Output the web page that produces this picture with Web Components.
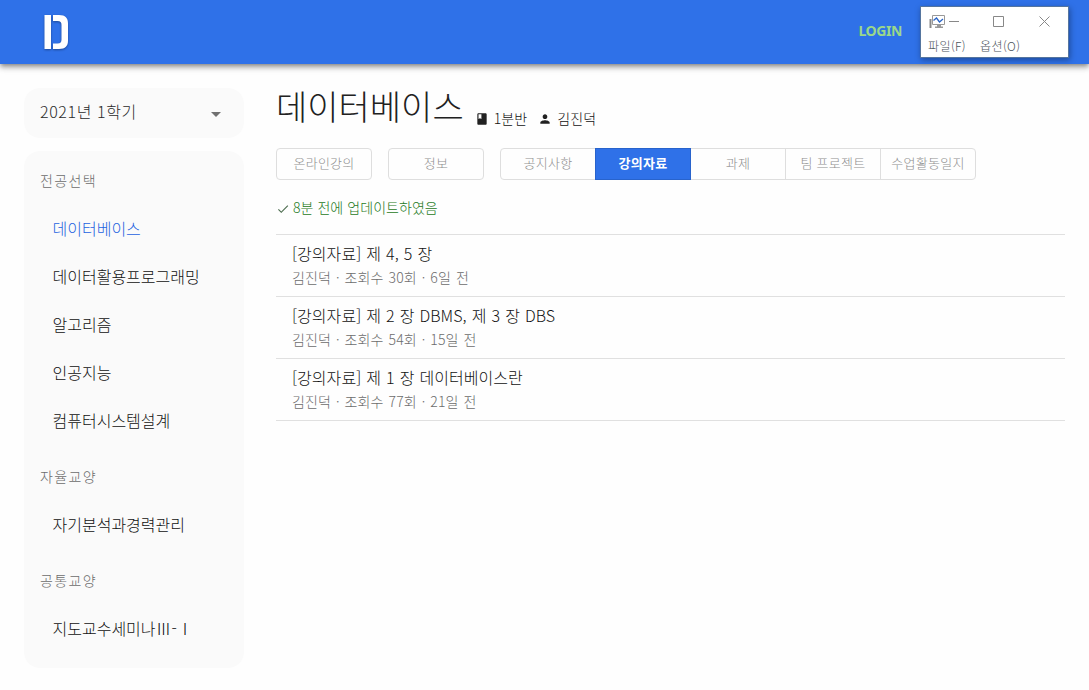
<!DOCTYPE html>
<html lang="ko">
<head>
<meta charset="utf-8">
<title>데이터베이스</title>
<style>
html, body { margin: 0; height: 100%; overflow: hidden; background: #fefefe; }
body { font-family: "Noto Sans CJK KR", "Noto Sans", sans-serif; font-weight: 300; color: #212121; }
</style>
</head>
<body>
<lms-page></lms-page>
<script>
function define(name, html) {
  const template = document.createElement('template');
  template.innerHTML = html;
  customElements.define(name, class extends HTMLElement {
    constructor() {
      super();
      this.attachShadow({ mode: 'open' }).append(template.content.cloneNode(true));
    }
  });
}

define('app-bar', `
<style>
:host { display: flex; position: relative; z-index: 2; box-sizing: border-box; height: 64px; padding: 15px 187px 0 44px; justify-content: space-between; align-items: flex-start; background: #2f71e8; box-shadow: 0 2px 4px -1px rgba(0,0,0,.3), 0 4px 5px rgba(0,0,0,.2), 0 1px 10px rgba(0,0,0,.14); }
svg { filter: drop-shadow(0 1px 1px rgba(0,0,0,.35)); }
.login { color: #9bd88a; font: 700 14px/20px "Noto Sans", sans-serif; margin-top: 6px; letter-spacing: -.4px; }
</style>
<svg width="25" height="35" viewBox="0 0 25 35" fill="#fff"><path d="M.5 0H7v34H.5zM9 0h6c6.500 0 9 3 9 8.500v17c0 5.500-2.500 8.500-9 8.500H9v-5.500h4.500c3 0 4-1.500 4-4V10c0-2.500-1-4-4-4H9z"/></svg>
<span class="login"><slot></slot></span>`);

define('tool-window', `
<style>
:host { display: block; position: absolute; z-index: 5; left: 920px; top: 6px; width: 149px; height: 52px; box-sizing: border-box; border: 1px solid #55759f; background: #fff; box-shadow: 1px 2px 6px rgba(0,0,0,.35); font-size: 12px; color: #4b545c; }
.bar { display: flex; height: 28px; align-items: center; padding: 0 17px 0 8px; }
.min { margin-left: 3px; } .max { margin-left: 34px; } .close { margin-left: 35px; }
.menu { display: flex; gap: 14px; padding-left: 7px; line-height: 22px; letter-spacing: .4px; }
svg { display: block; flex: none; }
</style>
<div class="bar">
<svg width="17" height="16" viewBox="0 0 17 16"><path d="M.5 6h2v9h-2z" fill="#888"/><path d="M3.500 2.500h12v9h-12z" fill="#fff" stroke="#999"/><path d="M4.500 7.500 7.500 5l3 4 3.500-3" fill="none" stroke="#2864c8" stroke-width="1.300"/><path d="M8 12h4v1.500h2V15H6v-1.500h2z" fill="#999"/></svg>
<svg class="min" width="10" height="11"><path d="M0 5.500h10" stroke="#888"/></svg>
<svg class="max" width="11" height="11"><path d="M.5.500h10v10H.5z" fill="none" stroke="#888"/></svg>
<svg class="close" width="11" height="11"><path d="m.5.500 10 10m0-10-10 10" fill="none" stroke="#888"/></svg>
</div>
<div class="menu"><span>파일(F)</span><span>옵션(O)</span></div>`);

define('semester-select', `
<style>
:host { display: flex; box-sizing: border-box; height: 50px; border-radius: 16px; background: #fafafa; padding: 0 16px; align-items: center; justify-content: space-between; font-size: 16px; letter-spacing: .6px; color: #2a2a2a; }
span { line-height: 24px; margin-top: -4px; }
svg { display: block; margin: 2px 0 0; }
</style>
<span><slot></slot></span>
<svg width="24" height="24" viewBox="0 0 24 24" fill="#707070"><path d="m7 10 5 5 5-5z"/></svg>`);

define('course-panel', `
<style>
:host { display: flex; flex-direction: column; box-sizing: border-box; height: 517px; margin-top: 13px; padding: 5px 0 6px; gap: 8px; border-radius: 16px; background: #fafafa; }
</style><slot></slot>`);
define('course-group', `
<style>
:host { display: block; }
.head { line-height: 48px; font-size: 14px; letter-spacing: 1.350px; padding-left: 16px; color: #6c6c6c; }
</style><div class="head"><slot name="head"></slot></div><slot></slot>`);
define('course-link', `
<style>
:host { display: block; height: 48px; line-height: 48px; padding-left: 28.500px; font-size: 16px; color: #111; }
:host([active]) { color: #1d62e0; }
</style><slot></slot>`);

define('course-title', `
<style>
:host { display: flex; height: 48px; align-items: flex-start; }
h1 { margin: -3px 12px 0 0; font-size: 34px; line-height: 42px; font-weight: 300; }
.meta { display: flex; align-items: center; gap: 5px; height: 24px; margin: 18px 12px 0 0; font-size: 14px; letter-spacing: .1px; color: #111; }
.meta:last-child { margin-left: -1px; }
svg { display: block; margin-top: 2px; }
h1 + .meta svg { margin-left: -1px; }
</style>
<h1><slot></slot></h1>
<span class="meta"><svg width="14" height="14" viewBox="0 0 24 24" fill="#212121"><path d="M18 2H6c-1.100 0-2 .9-2 2v16c0 1.100.9 2 2 2h12c1.100 0 2-.9 2-2V4c0-1.100-.9-2-2-2zM6 4h5v8l-2.500-1.500L6 12V4z"/></svg><slot name="section"></slot></span>
<span class="meta"><svg width="14" height="14" viewBox="0 0 24 24" fill="#212121"><path d="M12 12c2.210 0 4-1.790 4-4s-1.790-4-4-4-4 1.790-4 4 1.790 4 4 4zm0 2c-2.670 0-8 1.340-8 4v2h16v-2c0-2.660-5.330-4-8-4z"/></svg><slot name="teacher"></slot></span>`);

define('tab-bar', `
<style>:host { display: flex; margin-top: 12px; gap: 16px; }</style><slot></slot>`);
define('tab-group', `
<style>
:host { display: flex; width: fit-content; border-radius: 4px; }
::slotted(*) { margin-left: -1px; }
::slotted(:first-child) { margin-left: 0; }
</style><slot></slot>`);
define('tab-button', `
<style>
:host { display: block; box-sizing: border-box; width: 96px; height: 32px; border: 1px solid #dedede; border-radius: var(--r, 4px); text-align: center; font-size: 13px; line-height: 28px; letter-spacing: .25px; color: #8e8e8e; white-space: nowrap; }
:host([active]) { position: relative; background: #2f71e8; border-color: #2863cc; color: #fff; font-weight: 700; }
</style><slot></slot>`);

define('update-note', `
<style>
:host { display: flex; align-items: center; height: 24px; margin: 16px 0 14px; gap: 3px; font-size: 14px; letter-spacing: .05px; color: #1e7a24; }
svg { display: block; margin-top: 2px; }
span { margin-top: -2px; }
</style>
<svg width="14" height="14" viewBox="0 0 24 24" fill="#4f6f52"><path d="M9 16.170 4.830 12l-1.420 1.410L9 19 21 7l-1.410-1.410z"/></svg><span><slot></slot></span>`);

define('post-list', `
<style>:host { display: block; border-top: 1px solid #e0e0e0; }</style><slot></slot>`);
define('post-item', `
<style>
:host { display: flex; flex-direction: column; box-sizing: border-box; height: 62px; padding: 6px 16px 0; border-bottom: 1px solid #e0e0e0; }
.title { font-size: 16px; line-height: 24px; word-spacing: .5px; letter-spacing: .05px; color: #111; }
.info { font-size: 14px; line-height: 24px; word-spacing: 1px; letter-spacing: .1px; color: #6c6c6c; }
</style>
<div class="title"><slot></slot></div><div class="info"><slot name="info"></slot></div>`);

define('lms-page', `
<style>
:host { display: block; height: 690px; position: relative; }
main { display: grid; grid-template-columns: 220px 789px; column-gap: 32px; padding: 24px; padding-bottom: 0; }
</style>
<app-bar>LOGIN</app-bar>
<tool-window></tool-window>
<main>
<nav>
<semester-select>2021년 1학기</semester-select>
<course-panel>
<course-group><span slot="head">전공선택</span><course-link active>데이터베이스</course-link><course-link>데이터활용프로그래밍</course-link><course-link>알고리즘</course-link><course-link>인공지능</course-link><course-link>컴퓨터시스템설계</course-link></course-group>
<course-group><span slot="head">자율교양</span><course-link>자기분석과경력관리</course-link></course-group>
<course-group><span slot="head">공통교양</span><course-link>지도교수세미나Ⅲ-Ⅰ</course-link></course-group>
</course-panel>
</nav>
<section>
<course-title>데이터베이스<span slot="section">1분반</span><span slot="teacher">김진덕</span></course-title>
<tab-bar><tab-button>온라인강의</tab-button><tab-button>정보</tab-button>
<tab-group><tab-button style="--r:4px 0 0 4px">공지사항</tab-button><tab-button active style="--r:0">강의자료</tab-button><tab-button style="--r:0">과제</tab-button><tab-button style="--r:0">팀 프로젝트</tab-button><tab-button style="--r:0 4px 4px 0">수업활동일지</tab-button></tab-group></tab-bar>
<update-note>8분 전에 업데이트하였음</update-note>
<post-list>
<post-item>[강의자료] 제 4, 5 장<span slot="info">김진덕 · 조회수 30회 · 6일 전</span></post-item>
<post-item>[강의자료] 제 2 장 DBMS, 제 3 장 DBS<span slot="info">김진덕 · 조회수 54회 · 15일 전</span></post-item>
<post-item>[강의자료] 제 1 장 데이터베이스란<span slot="info">김진덕 · 조회수 77회 · 21일 전</span></post-item>
</post-list>
</section>
</main>`);
</script>
</body>
</html>
